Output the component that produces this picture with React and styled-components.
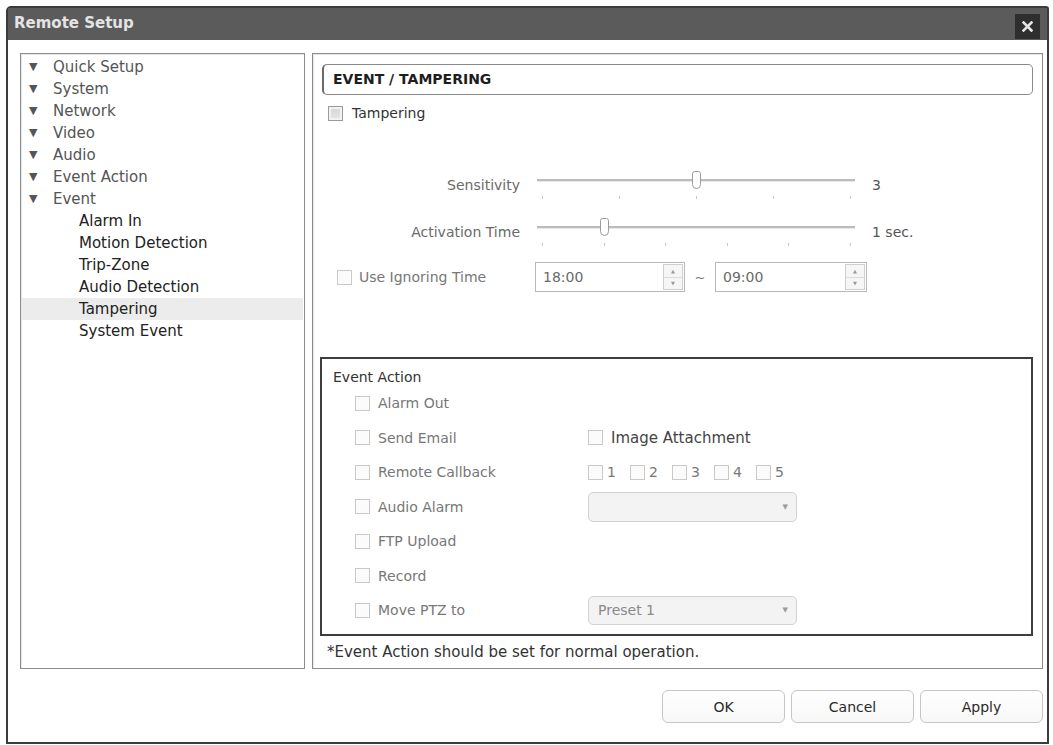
import React from 'react';
import styled, { createGlobalStyle } from 'styled-components';

const GlobalStyle = createGlobalStyle`
  html, body {
    margin: 0;
    padding: 0;
    background: #fff;
  }
  body {
    font-family: "DejaVu Sans", Verdana, sans-serif;
    color: #333;
  }
  * { box-sizing: border-box; }
`;

const Window = styled.div`
  margin: 6px 0 0 6px;
  width: 1043px;
  height: 738px;
  border: 2px solid #3b3b3b;
  border-radius: 5px 3px 0 0;
  background: #fff;
  display: flex;
  flex-direction: column;
`;

const TitleBar = styled.div`
  height: 32px;
  flex-shrink: 0;
  background: #5b5b5b;
  display: flex;
  align-items: stretch;
  justify-content: space-between;
  padding: 0 7px 0 6px;
`;

const Title = styled.div`
  font-size: 15px;
  font-weight: bold;
  color: #e4e4e4;
  line-height: 30px;
`;

const CloseButton = styled.div`
  align-self: flex-end;
  width: 25px;
  height: 25px;
  margin-bottom: 1px;
  background: #2e2e2e;
  display: flex;
  align-items: center;
  justify-content: center;
`;

const Body = styled.div`
  flex: 1;
  padding: 13px 4px 0 12px;
  display: flex;
  flex-direction: column;
`;

const Panels = styled.div`
  height: 616px;
  display: flex;
  gap: 7px;
`;

const TreePanel = styled.div`
  width: 285px;
  border: 1px solid #8c8c8c;
  box-shadow: inset 1px 1px 0 #e6e6e6;
  padding: 2px 1px;
`;

const TreeItem = styled.div`
  height: 22px;
  line-height: 22px;
  font-size: 15px;
  display: flex;
  align-items: center;
  padding-left: ${p => (p.$child ? 57 : 7)}px;
  color: ${p => (p.$child ? '#222' : '#555')};
  background: ${p => (p.$active ? '#ececec' : 'transparent')};
`;

const Arrow = styled.span`
  font-size: 11px;
  color: #555;
  width: 24px;
  line-height: 22px;
`;

const MainPanel = styled.div`
  flex: 1;
  border: 1px solid #8c8c8c;
  box-shadow: inset 1px 1px 0 #e6e6e6;
  padding: 10px 9px 0 9px;
  display: flex;
  flex-direction: column;
`;

const Heading = styled.div`
  height: 31px;
  border: 1px solid #8a8a8a;
  border-left: 2px solid #6a6a6a;
  border-radius: 5px;
  padding-left: 9px;
  font-size: 14px;
  font-weight: bold;
  color: #1e1e1e;
  line-height: 29px;
`;

const CheckRow = styled.label`
  display: flex;
  align-items: center;
  height: 20px;
  font-size: ${p => p.$size || 14}px;
  color: ${p => p.$color || '#333'};
  margin: ${p => p.$margin || '0'};
`;

const Box = styled.span`
  width: 15px;
  height: 15px;
  flex-shrink: 0;
  margin-right: ${p => p.$gap ?? 8}px;
  border: 1px solid ${p => (p.$dark ? '#9a9a9a' : '#c9c9c9')};
  background: ${p => (p.$dark ? 'linear-gradient(#d4d4d4, #e8e8e8)' : '#fbfbfb')};
  box-shadow: ${p => (p.$dark ? 'inset 0 0 0 2px #f2f2f2' : 'none')};
`;

const SliderRow = styled.div`
  display: flex;
  align-items: flex-start;
  height: 30px;
  margin-top: ${p => p.$top}px;
`;

const SliderLabel = styled.div`
  width: 198px;
  text-align: right;
  font-size: 14px;
  line-height: 30px;
  color: #6a6a6a;
`;

const Track = styled.div`
  position: relative;
  width: 318px;
  height: 30px;
  margin-left: 17px;

  &::before {
    content: '';
    position: absolute;
    left: 0;
    right: 0;
    top: 9px;
    height: 2px;
    background: #bcbcbc;
    border-bottom: 1px solid #e8e8e8;
  }
`;

const Tick = styled.span`
  position: absolute;
  top: 26px;
  width: 1px;
  height: 3px;
  background: #c6c6c6;
`;

const Thumb = styled.span`
  position: absolute;
  top: 1px;
  width: 9px;
  height: 18px;
  margin-left: -4px;
  background: #fff;
  border: 1px solid #9c9c9c;
  border-radius: 3px 3px 5px 5px;
`;

const SliderValue = styled.div`
  margin-left: 17px;
  font-size: 14px;
  line-height: 30px;
  color: #555;
`;

const IgnoreRow = styled.div`
  display: flex;
  align-items: center;
  margin-top: 15px;
  height: 30px;
`;

const IgnoreLabel = styled.label`
  width: 213px;
  padding-left: 15px;
  display: flex;
  align-items: center;
  font-size: 14px;
  color: #777;
`;

const Spinner = styled.div`
  width: ${p => p.$w}px;
  height: 30px;
  border: 1px solid #b8b8b8;
  display: flex;
  align-items: stretch;
`;

const SpinText = styled.div`
  flex: 1;
  padding-left: 7px;
  font-size: 14px;
  line-height: 28px;
  color: #6a6a6a;
`;

const SpinButtons = styled.div`
  width: 20px;
  margin: 1px;
  border: 1px solid #cfcfcf;
  display: flex;
  flex-direction: column;
`;

const SpinHalf = styled.div`
  flex: 1;
  font-size: 5px;
  color: #999;
  display: flex;
  align-items: center;
  justify-content: center;
  background: #f6f6f6;
  & + & { border-top: 1px solid #dcdcdc; }
`;

const Tilde = styled.span`
  width: 30px;
  text-align: center;
  font-size: 13px;
  color: #777;
`;

const ActionBox = styled.div`
  margin: 65px 0 0 -2px;
  height: 279px;
  border: 2px solid #3e3e3e;
  padding: 8px 0 0 11px;
`;

const ActionTitle = styled.div`
  font-size: 14px;
  line-height: 20px;
  color: #333;
  margin-bottom: -1px;
`;

const ActionRow = styled.div`
  height: 34.5px;
  display: flex;
  align-items: center;
  padding-left: 22px;
`;

const ActionLabel = styled.label`
  width: 233px;
  display: flex;
  align-items: center;
  font-size: 14px;
  color: #777;
`;

const Numbers = styled.div`
  display: flex;
  gap: 10px;
`;

const NumberItem = styled.label`
  display: flex;
  align-items: center;
  font-size: 14px;
  color: #777;
  width: 32px;
`;

const Select = styled.div`
  width: 209px;
  height: ${p => p.$h}px;
  border: 1px solid #d2d2d2;
  border-radius: 5px;
  background: #f3f3f3;
  display: flex;
  align-items: center;
  justify-content: space-between;
  padding: 0 8px 0 9px;
  font-size: 14px;
  color: #8a8a8a;
`;

const Caret = styled.span`
  font-size: 7px;
  color: #9a9a9a;
`;

const Footnote = styled.div`
  font-size: 15px;
  line-height: 20px;
  color: #333;
  margin: 6px 0 0 5px;
`;

const Footer = styled.div`
  display: flex;
  justify-content: flex-end;
  gap: 6px;
  margin-top: 21px;
`;

const Button = styled.button`
  width: 123px;
  height: 33px;
  border: 1px solid #c6c6c6;
  border-radius: 6px;
  background: linear-gradient(#ffffff, #f7f7f7);
  font-family: "DejaVu Sans", Verdana, sans-serif;
  font-size: 14px;
  color: #2a2a2a;
`;

const menu = [
  { label: 'Quick Setup' },
  { label: 'System' },
  { label: 'Network' },
  { label: 'Video' },
  { label: 'Audio' },
  { label: 'Event Action' },
  { label: 'Event' },
  { label: 'Alarm In', child: true },
  { label: 'Motion Detection', child: true },
  { label: 'Trip-Zone', child: true },
  { label: 'Audio Detection', child: true },
  { label: 'Tampering', child: true, active: true },
  { label: 'System Event', child: true },
];

const Slider = ({ ticks, value }) => {
  const step = 308 / (ticks - 1);
  return (
    <Track>
      {Array.from({ length: ticks }, (_, i) => (
        <Tick key={i} style={{ left: 5 + i * step }} />
      ))}
      <Thumb style={{ left: 5 + value * step }} />
    </Track>
  );
};

const TimeSpinner = ({ value, width }) => (
  <Spinner $w={width}>
    <SpinText>{value}</SpinText>
    <SpinButtons>
      <SpinHalf>▲</SpinHalf>
      <SpinHalf>▼</SpinHalf>
    </SpinButtons>
  </Spinner>
);

const Action = ({ label, children }) => (
  <ActionRow>
    <ActionLabel>
      <Box />
      {label}
    </ActionLabel>
    {children}
  </ActionRow>
);

export default function App() {
  return (
    <>
      <GlobalStyle />
      <Window>
        <TitleBar>
          <Title>Remote Setup</Title>
          <CloseButton>
            <svg width="11" height="11" viewBox="0 0 11 11">
              <path d="M1.5 1.5 L9.5 9.5 M9.5 1.5 L1.5 9.5" stroke="#e6e6e6" strokeWidth="2.6" strokeLinecap="square" />
            </svg>
          </CloseButton>
        </TitleBar>
        <Body>
          <Panels>
            <TreePanel>
              {menu.map(item => (
                <TreeItem key={item.label} $child={item.child} $active={item.active}>
                  {!item.child && <Arrow>▼</Arrow>}
                  {item.label}
                </TreeItem>
              ))}
            </TreePanel>
            <MainPanel>
              <Heading>EVENT / TAMPERING</Heading>
              <CheckRow $margin="8px 0 0 6px">
                <Box $dark $gap={9} />
                Tampering
              </CheckRow>

              <SliderRow $top={47}>
                <SliderLabel>Sensitivity</SliderLabel>
                <Slider ticks={5} value={2} />
                <SliderValue>3</SliderValue>
              </SliderRow>
              <SliderRow $top={17}>
                <SliderLabel>Activation Time</SliderLabel>
                <Slider ticks={6} value={1} />
                <SliderValue>1 sec.</SliderValue>
              </SliderRow>

              <IgnoreRow>
                <IgnoreLabel>
                  <Box $gap={7} />
                  Use Ignoring Time
                </IgnoreLabel>
                <TimeSpinner value="18:00" width={150} />
                <Tilde>~</Tilde>
                <TimeSpinner value="09:00" width={152} />
              </IgnoreRow>

              <ActionBox>
                <ActionTitle>Event Action</ActionTitle>
                <Action label="Alarm Out" />
                <Action label="Send Email">
                  <CheckRow $color="#444" $size={15}>
                    <Box />
                    Image Attachment
                  </CheckRow>
                </Action>
                <Action label="Remote Callback">
                  <Numbers>
                    {[1, 2, 3, 4, 5].map(n => (
                      <NumberItem key={n}>
                        <Box $gap={4} />
                        {n}
                      </NumberItem>
                    ))}
                  </Numbers>
                </Action>
                <Action label="Audio Alarm">
                  <Select $h={30}>
                    <span />
                    <Caret>▼</Caret>
                  </Select>
                </Action>
                <Action label="FTP Upload" />
                <Action label="Record" />
                <Action label="Move PTZ to">
                  <Select $h={29}>
                    <span>Preset 1</span>
                    <Caret>▼</Caret>
                  </Select>
                </Action>
              </ActionBox>
              <Footnote>*Event Action should be set for normal operation.</Footnote>
            </MainPanel>
          </Panels>
          <Footer>
            <Button>OK</Button>
            <Button>Cancel</Button>
            <Button>Apply</Button>
          </Footer>
        </Body>
      </Window>
    </>
  );
}
